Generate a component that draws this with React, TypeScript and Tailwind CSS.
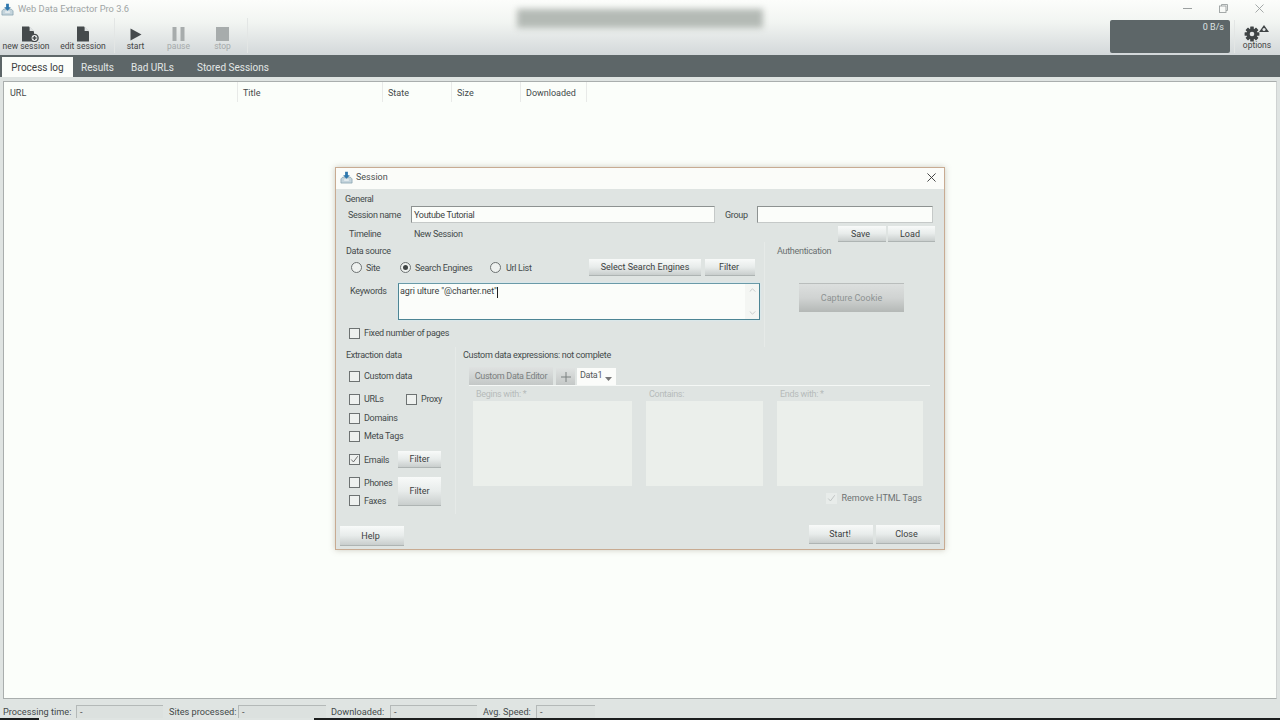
import React from "react";

const btn = "flex items-center justify-center pt-[2px] tracking-normal whitespace-nowrap bg-linear-to-b from-[#f8faf9] via-[#e8ecEb] to-[#c9cecd] border-b border-b-[#aeb4b3] text-[#3c3f3f]";
const lbl = "pt-[2px]";

function Check({ checked, faint }: { checked?: boolean; faint?: boolean }) {
  return (
    <span className={`w-[11px] h-[11px] shrink-0 flex items-center justify-center border ${faint ? "border-[#e8ecea] bg-[#e8ecea]" : "border-[#6d7272] bg-[#eef1ef]"}`}>
      {checked && (
        <svg viewBox="0 0 11 11" className="w-[9px] h-[9px]" fill="none" stroke={faint ? "#b5baba" : "#555"} strokeWidth="1">
          <path d="M1.5 5.5 L4.2 8.5 L9.5 1.5" />
        </svg>
      )}
    </span>
  );
}

function Radio({ on }: { on?: boolean }) {
  return (
    <span className="w-[11px] h-[11px] shrink-0 rounded-full border border-[#6d7272] bg-[#eef1ef] flex items-center justify-center">
      {on && <span className="w-[5px] h-[5px] rounded-full bg-[#3f4444]" />}
    </span>
  );
}

function CheckRow({ label, h, checked, className = "" }: { label: string; h: string; checked?: boolean; className?: string }) {
  return (
    <div className={`flex items-center gap-[4px] pl-[4px] whitespace-nowrap ${h} ${className}`}>
      <Check checked={checked} />
      <span className={lbl}>{label}</span>
    </div>
  );
}

function AppIcon({ className }: { className: string }) {
  return (
    <svg viewBox="0 0 14 14" className={className}>
      <path d="M1 8.5 L3 6.5 H11 L13 8.5 V13 H1 Z" fill="#c4d4dc" stroke="#7d9aa8" strokeWidth="0.7" />
      <path d="M4.5 9 H9.5 V10.5 H4.5 Z" fill="#eef3f5" />
      <path d="M5.5 0.8 H8.5 V4.5 H10.6 L7 8.4 L3.4 4.5 H5.5 Z" fill="#2d77ad" />
    </svg>
  );
}

function Doc({ plus }: { plus?: boolean }) {
  return (
    <svg viewBox="0 0 22 16" className="w-[22px] h-[16px]">
      <path d="M5 0.5 H12 L17 5.5 V15.5 H5 Z" fill="#454a4c" />
      <path d="M12.6 0.5 L17 4.9 H12.6 Z" fill="#dfe3e3" />
      {plus && (
        <>
          <circle cx="17.5" cy="12" r="3.6" fill="#eceeee" stroke="#454a4c" strokeWidth="1.4" />
          <path d="M17.5 10 V14 M15.5 12 H19.5" stroke="#454a4c" strokeWidth="1.4" />
        </>
      )}
    </svg>
  );
}

function Tool({ label, w, dim, children }: { label: string; w: string; dim?: boolean; children: React.ReactNode }) {
  return (
    <div className={`flex flex-col items-center ${w}`}>
      <div className="h-[18px] flex items-center justify-center">{children}</div>
      <span className={`-mt-[3px] leading-[12px] text-[8.5px] whitespace-nowrap ${dim ? "text-[#a5aaaa]" : "text-[#444]"}`}>{label}</span>
    </div>
  );
}

function Gear() {
  return (
    <svg viewBox="0 0 26 18" className="w-[26px] h-[18px]">
      <g fill="#3f4445">
        {[0, 45, 90, 135].map((a) => (
          <rect key={a} x="6.2" y="2.6" width="3.6" height="14.8" rx="0.5" transform={`rotate(${a} 8 10)`} />
        ))}
      </g>
      <circle cx="8" cy="10" r="5.4" fill="#3f4445" />
      <circle cx="8" cy="10" r="2.3" fill="#e3e6e6" />
      <path d="M20 1 L25 8 H15 Z" fill="#3f4445" />
      <circle cx="20" cy="5.6" r="1.5" fill="#e3e6e6" />
    </svg>
  );
}

function StatusItem({ label, wLabel, wBox, gap }: { label: string; wLabel: string; wBox: string; gap: string }) {
  return (
    <div className={`flex items-end ${gap}`}>
      <span className={`${wLabel} whitespace-nowrap h-[13px] leading-[13px]`}>{label}</span>
      <span className={`${wBox} h-[13px] border-l border-t border-[#b4b9b8] bg-[#dce1df] pl-[3px] leading-[12px]`}>-</span>
    </div>
  );
}

function Column({ label, w, first }: { label: string; w: string; first?: boolean }) {
  return (
    <div className={`${w} h-full ${first ? "pl-[6px]" : "pl-[5px]"} pt-[3px] flex items-center border-r border-[#e8eae8]`}>{label}</div>
  );
}

function FaintBox({ label, w }: { label: string; w: string }) {
  return (
    <div className={`${w} flex flex-col`}>
      <div className="h-[15px] pl-[3px] pt-[2px] flex items-center whitespace-nowrap text-[#b6bbba]">{label}</div>
      <div className="h-[85px] bg-[#ebefeb]" />
    </div>
  );
}

function Dialog() {
  return (
    <div className="absolute left-[335px] top-[167px] w-[610px] h-[383px] flex flex-col border border-[#c8ab92] bg-[#dfe4e2] shadow-[0_0_6px_rgba(120,110,90,0.35)] text-[9px] tracking-[-0.3px] text-[#444a4a]">
      <div className="h-[21px] shrink-0 bg-[#fbfcf9] flex items-center pl-[4px] pr-[8px] pb-[2px]">
        <AppIcon className="w-[13px] h-[13px]" />
        <span className="ml-[3px] text-[#4a4e4e] tracking-normal">Session</span>
        <svg viewBox="0 0 10 10" className="ml-auto w-[9px] h-[9px]" fill="none" stroke="#333" strokeWidth="1">
          <path d="M0.5 0.5 L9.5 9.5 M9.5 0.5 L0.5 9.5" />
        </svg>
      </div>

      <div className="flex-1 flex flex-col pl-[9px]">
        <div className="h-[17px] pt-[5px] flex items-center shrink-0">General</div>

        <div className="h-[17px] flex items-center shrink-0">
          <span className={`w-[66px] pl-[3px] whitespace-nowrap ${lbl}`}>Session name</span>
          <div className="w-[304px] h-[17px] border border-[#8d9291] border-r-[#c5c9c8] border-b-[#c5c9c8] bg-[#fbfdfa] pl-[2px] leading-[16px] text-[#3f4444]">Youtube Tutorial</div>
          <span className={`w-[42px] pl-[10px] ${lbl}`}>Group</span>
          <div className="w-[176px] h-[17px] border border-[#8d9291] border-r-[#c5c9c8] border-b-[#c5c9c8] bg-[#fbfdfa]" />
        </div>

        <div className="h-[16px] mt-[3px] flex items-center shrink-0 pr-[9px]">
          <span className={`w-[69px] pl-[4px] ${lbl}`}>Timeline</span>
          <span className={`whitespace-nowrap ${lbl}`}>New Session</span>
          <div className="ml-auto flex gap-[2px]">
            <div className={`${btn} w-[48px] h-[16px] pr-[3px]`}>Save</div>
            <div className={`${btn} w-[47px] h-[16px] pr-[3px]`}>Load</div>
          </div>
        </div>

        <div className="flex shrink-0 h-[105px]">
          <div className="w-[420px] flex flex-col border-r border-[#e6eae8]">
            <div className="h-[17px] pl-[1px] pt-[3px] flex items-center">Data source</div>
            <div className="h-[17px] flex items-center pl-[6px] whitespace-nowrap">
              <Radio /><span className={`ml-[4px] w-[34px] ${lbl}`}>Site</span>
              <Radio on /><span className={`ml-[4px] w-[75px] ${lbl}`}>Search Engines</span>
              <Radio /><span className={`ml-[5px] w-[83px] ${lbl}`}>Url List</span>
              <div className={`${btn} w-[112px] h-[17px]`}>Select Search Engines</div>
              <div className={`${btn} w-[50px] h-[17px] ml-[4px] pr-[2px]`}>Filter</div>
            </div>
            <div className="flex mt-[7px] h-[37px]">
              <span className="w-[53px] pl-[5px] pt-[1px] h-[16px] flex items-center">Keywords</span>
              <div className="w-[362px] h-[37px] border border-[#4d8594] border-t-[#6a9aa8] bg-[#fbfdfa] flex shadow-[0_0_2px_#cfeef8]">
                <div className="flex-1 pl-[1px] h-[15px] pt-[1px] flex items-center tracking-[-0.1px] text-[#3a3f3f]">
                  <span>agri ulture "@charter.net"</span>
                  <span className="w-px h-[11px] bg-[#222]" />
                </div>
                <div className="w-[14px] flex flex-col justify-between items-center py-[4px] bg-[#f4f6f3]">
                  <svg viewBox="0 0 8 5" className="w-[7px] h-[4px]" fill="none" stroke="#bfc3c3"><path d="M0.5 4.5 L4 1 L7.5 4.5" /></svg>
                  <svg viewBox="0 0 8 5" className="w-[7px] h-[4px]" fill="none" stroke="#bfc3c3"><path d="M0.5 0.5 L4 4 L7.5 0.5" /></svg>
                </div>
              </div>
            </div>
            <CheckRow label="Fixed number of pages" h="h-[16px]" className="mt-[5px]" />
          </div>
          <div className="ml-[12px] flex flex-col">
            <div className="h-[17px] pt-[3px] flex items-center text-[#6a7070]">Authentication</div>
            <div className="mt-[24px] ml-[22px] w-[105px] h-[29px] flex items-center justify-center pt-[1px] tracking-normal whitespace-nowrap bg-linear-to-b from-[#dcdfde] via-[#d0d3d2] to-[#b4b8b6] border-t border-[#b9bdbc] text-[#8d9292]">Capture Cookie</div>
          </div>
        </div>

        <div className="flex shrink-0 h-[167px]">
          <div className="w-[111px] flex flex-col border-r border-[#e6eae8]">
            <div className="h-[16px] pl-[1px] pt-[2px] flex items-center whitespace-nowrap">Extraction data</div>
            <CheckRow label="Custom data" h="h-[16px]" className="mt-[5px]" />
            <div className="flex items-center h-[16px] mt-[7px]">
              <CheckRow label="URLs" h="h-[16px]" className="w-[61px]" />
              <Check /><span className={`ml-[4px] ${lbl}`}>Proxy</span>
            </div>
            <CheckRow label="Domains" h="h-[16px]" className="mt-[3px]" />
            <CheckRow label="Meta Tags" h="h-[16px]" className="mt-[2px]" />
            <div className="flex items-center h-[17px] mt-[7px]">
              <CheckRow label="Emails" h="h-[17px]" className="w-[53px]" checked />
              <div className={`${btn} w-[43px] h-[17px]`}>Filter</div>
            </div>
            <div className="flex items-center h-[29px] mt-[9px]">
              <div className="w-[53px] flex flex-col">
                <CheckRow label="Phones" h="h-[14px]" />
                <CheckRow label="Faxes" h="h-[14px]" className="mt-[4px]" />
              </div>
              <div className={`${btn} w-[43px] h-[29px]`}>Filter</div>
            </div>
          </div>
          <div className="flex flex-col ml-[6px] w-[470px]">
            <div className="h-[16px] pl-[1px] pt-[2px] flex items-center whitespace-nowrap">Custom data expressions: not complete</div>
            <div className="flex items-end h-[18px] mt-[4px] ml-[7px]">
              <div className="w-[84px] h-[18px] flex items-center justify-center pt-[1px] whitespace-nowrap bg-linear-to-b from-[#dfe2e1] to-[#c4c8c7] text-[#7b8080]">Custom Data Editor</div>
              <div className="w-[19px] h-[17px] ml-[3px] flex items-center justify-center bg-linear-to-b from-[#dfe2e1] to-[#c4c8c7]">
                <svg viewBox="0 0 10 10" className="w-[10px] h-[10px]" stroke="#7b8080" strokeWidth="1"><path d="M5 0 V10 M0 5 H10" /></svg>
              </div>
              <div className="w-[39px] h-[17px] ml-[2px] flex items-center pl-[3px] gap-[3px] bg-[#fbfcfa] text-[#555a5a]">
                <span className="-mt-[1px]">Data1</span>
                <svg viewBox="0 0 7 4" className="w-[7px] h-[4px] mt-[5px]"><path d="M0 0 H7 L3.5 4 Z" fill="#777" /></svg>
              </div>
            </div>
            <div className="h-px w-[461px] ml-[7px] bg-[#f5f8f6]" />
            <div className="flex ml-[11px]">
              <FaintBox label="Begins with: *" w="w-[159px] mr-[14px]" />
              <FaintBox label="Contains:" w="w-[117px] mr-[14px]" />
              <FaintBox label="Ends with: *" w="w-[146px]" />
            </div>
            <div className="flex items-center justify-end h-[16px] mt-[4px] pr-[10px] gap-[5px] tracking-normal text-[#6d7272]">
              <Check checked faint />
              <span className={`whitespace-nowrap ${lbl}`}>Remove HTML Tags</span>
            </div>
          </div>
        </div>

        <div className="flex mt-[11px] -ml-[5px] items-start">
          <div className={`${btn} w-[64px] h-[20px] mt-[1px] pr-[3px]`}>Help</div>
          <div className={`${btn} w-[64px] h-[19px] ml-auto pr-[2px]`}>Start!</div>
          <div className={`${btn} w-[64px] h-[19px] ml-[3px] mr-[4px] pr-[3px]`}>Close</div>
        </div>
      </div>
    </div>
  );
}

export default function App() {
  return (
    <div className="relative w-[1280px] h-[720px] overflow-hidden flex flex-col bg-[#dfe4e2] text-[10px] text-[#444a4a] font-['Roboto',sans-serif]">
      <div className="h-[55px] shrink-0 flex flex-col bg-linear-to-b from-[#fcfdfb] via-[#f2f5f2] via-40% to-[#d3d8da]">
        <div className="h-[18px] shrink-0 flex items-center pl-[1px] pr-[16px]">
          <AppIcon className="w-[13px] h-[13px]" />
          <span className="ml-[4px] text-[9.3px] text-[#a0a5a5]">Web Data Extractor Pro 3.6</span>
          <div className="ml-auto flex items-center gap-[27px] -mt-[2px]">
            <span className="w-[9px] h-px bg-[#9ba0a0]" />
            <svg viewBox="0 0 9 9" className="w-[9px] h-[9px]" fill="none" stroke="#9ba0a0" strokeWidth="0.9">
              <rect x="0.5" y="2" width="6.5" height="6.5" /><path d="M2.5 2 V0.5 H8.5 V6.5 H7" />
            </svg>
            <svg viewBox="0 0 9 9" className="w-[9px] h-[9px]" fill="none" stroke="#9ba0a0" strokeWidth="0.9">
              <path d="M0.5 0.5 L8.5 8.5 M8.5 0.5 L0.5 8.5" />
            </svg>
          </div>
        </div>
        <div className="flex-1 flex items-stretch">
          <div className="flex pt-[7px] pl-[3px] h-[37px]">
            <Tool label="new session" w="w-[46px]"><span className="ml-[3px] flex"><Doc plus /></span></Tool>
            <div className="ml-[12px]"><Tool label="edit session" w="w-[44px]"><Doc /></Tool></div>
          </div>
          <div className="w-px h-[35px] ml-[9px] bg-[#e3e6e5]" />
          <div className="flex pt-[7px]">
            <div className="ml-[6px]"><Tool label="start" w="w-[29px]"><svg viewBox="0 0 12 13" className="w-[12px] h-[13px]"><path d="M0.5 0.5 L11.5 6.5 L0.5 12.5 Z" fill="#454a4c" /></svg></Tool></div>
            <div className="ml-[14px]"><Tool label="pause" w="w-[29px]" dim><svg viewBox="0 0 13 14" className="w-[13px] h-[14px]"><path d="M0.5 0 H4.5 V14 H0.5 Z M8.5 0 H12.5 V14 H8.5 Z" fill="#a7acac" /></svg></Tool></div>
            <div className="ml-[15px]"><Tool label="stop" w="w-[29px]" dim><svg viewBox="0 0 13 14" className="w-[13px] h-[14px]"><rect width="13" height="14" fill="#a7acac" /></svg></Tool></div>
          </div>
          <div className="w-px h-[35px] ml-[10px] bg-[#e3e6e5]" />
          <div className="ml-auto flex">
            <div className="w-[120px] h-[33px] mt-[2px] rounded-[2px] bg-[#5d6668] text-right text-[9px] text-[#dfe3e3] pr-[6px] pt-[1px]">0 B/s</div>
            <div className="w-px h-[33px] mt-[2px] ml-[4px] bg-[#e3e6e5]" />
            <div className="ml-[5px] mr-[6px] pt-[6px]"><Tool label="options" w="w-[34px]"><Gear /></Tool></div>
          </div>
        </div>
      </div>

      <div className="h-[22px] shrink-0 bg-[#5d6668] flex items-end pl-[2px]">
        <div className="w-[71px] h-[20px] bg-[#fbfdfa] flex items-center justify-center text-[#3c4040]">Process log</div>
        <div className="h-[20px] flex items-center text-[#e3e7e6] ml-[8px] w-[50px]">Results</div>
        <div className="h-[20px] flex items-center text-[#e3e7e6] w-[66px]">Bad URLs</div>
        <div className="h-[20px] flex items-center text-[#e3e7e6]">Stored Sessions</div>
      </div>

      <div className="mt-[4px] mx-[3px] h-[618px] shrink-0 bg-[#fbfefa] border border-[#a9aead] border-r-[#cfd3d2] text-[9px]">
        <div className="h-[20px] flex items-center">
          <Column label="URL" w="w-[234px]" first />
          <Column label="Title" w="w-[145px]" />
          <Column label="State" w="w-[69px]" />
          <Column label="Size" w="w-[69px]" />
          <Column label="Downloaded" w="w-[66px]" />
        </div>
      </div>

      <div className="h-[19px] shrink-0 flex items-end pl-[3px] text-[9.2px]">
        <StatusItem label="Processing time:" wLabel="w-[73px]" wBox="w-[87px]" gap="" />
        <StatusItem label="Sites processed:" wLabel="w-[69px]" wBox="w-[88px]" gap="ml-[6px]" />
        <StatusItem label="Downloaded:" wLabel="w-[59px]" wBox="w-[87px]" gap="ml-[5px]" />
        <StatusItem label="Avg. Speed:" wLabel="w-[53px]" wBox="w-[59px]" gap="ml-[6px]" />
      </div>
      <div className="h-[2px] shrink-0 flex bg-[#1c1e1e]">
        <div className="w-[39px]" />
        <div className="w-[275px] bg-[#dfe4e2]" />
      </div>

      <div className="absolute left-[517px] top-[9px] w-[246px] h-[19px] bg-[#b4bab5] blur-[3px]" />
      <Dialog />
    </div>
  );
}
